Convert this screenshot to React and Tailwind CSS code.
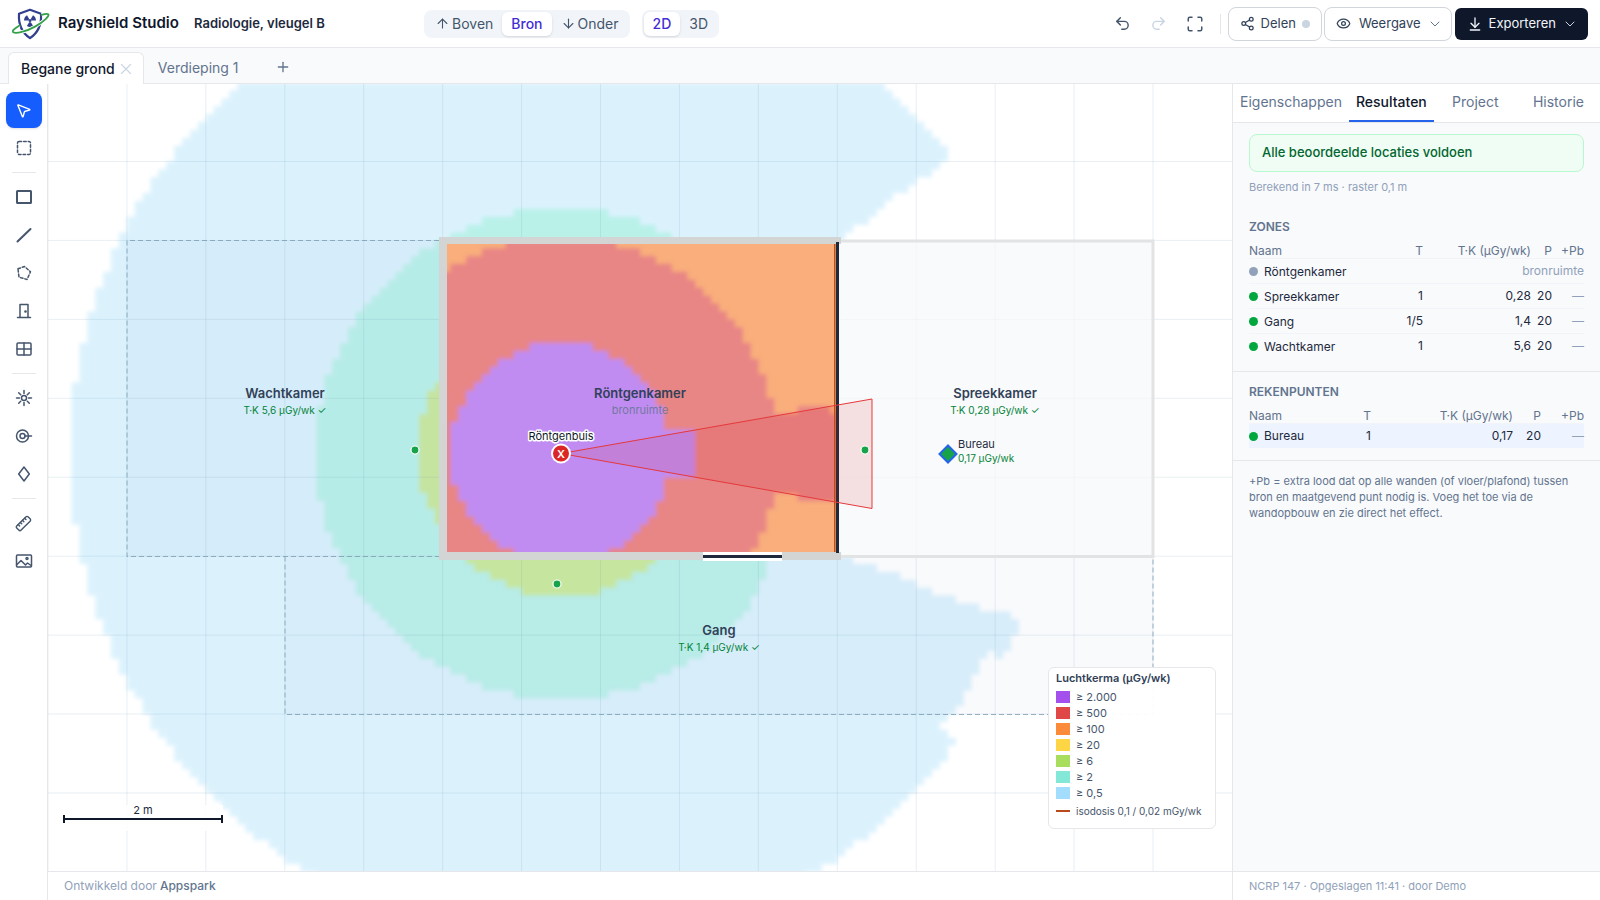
import React, { useState } from 'react';
import {
  ArrowDown, ArrowDownToLine, ArrowUp, ChevronDown, Eye, Maximize, MousePointer2,
  Plus, Redo2, Ruler, Share2, Undo2, X,
} from 'lucide-react';

// One metre on the plan, and the 0.1 m raster of the dose map
const METER = 78.93;
const CELL = METER / 10;
const GRID_X = 48;
const GRID_Y = 82.6;
const SOURCE = { x: 561, y: 453.5 };

const inPolygon = (x, y, pts) => {
  let inside = false;
  for (let i = 0, j = pts.length - 1; i < pts.length; j = i++) {
    const [xi, yi] = pts[i];
    const [xj, yj] = pts[j];
    if (yi > y !== yj > y && x < ((xj - xi) * (y - yi)) / (yj - yi) + xi) inside = !inside;
  }
  return inside;
};

const distance = (x, y) => Math.hypot(x - SOURCE.x, y - SOURCE.y);

// Area shielded by the lead wall
const SHADOW = [
  [838, 244], [847, 234], [873, 216], [903, 190], [917, 183], [948, 158], [1232, 120],
  [1232, 640], [1020, 618], [993, 611], [933, 592], [897, 576], [840, 556],
];
const NOTCH = [[1040, 664], [1010, 648], [998, 660], [990, 652], [980, 667], [960, 702], [942, 727], [957, 741], [980, 760]];
const BEAM_HIGH = [[770, 415], [797, 415], [804, 405], [829, 405], [834, 413], [840, 413], [840, 495], [828, 500], [810, 503], [797, 495], [770, 494]];

const raster = (test) => {
  const rows = [];
  for (let j = 0; j < 101; j++) {
    const y = GRID_Y + j * CELL;
    let start = null;
    for (let i = 0; i <= 150; i++) {
      const x = GRID_X + i * CELL;
      const hit = i < 150 && test(x + CELL / 2, y + CELL / 2);
      if (hit && start === null) start = x;
      if (!hit && start !== null) {
        rows.push(`M${start.toFixed(1)} ${y.toFixed(1)}H${x.toFixed(1)}V${(y + CELL).toFixed(1)}H${start.toFixed(1)}Z`);
        start = null;
      }
    }
  }
  return rows.join('');
};

const BLUE = raster((x, y) => distance(x, y) < 490 && !inPolygon(x, y, SHADOW) && !inPolygon(x, y, NOTCH));
const TEAL = raster((x, y) => distance(x, y) < 245 && !(y > 500 && x > 770 - (y - 556) * 0.38));
const GREEN = raster((x, y) => distance(x, y) < 143);
const RED = raster((x, y) => distance(x, y) < 216 || inPolygon(x, y, BEAM_HIGH));
const PURPLE = raster((x, y) => (distance(x, y) < 111 && x < 664) || (x > 650 && x < 697 && y > 428 && y < 478));

const legend = [
  { label: '≥ 2.000', color: 'bg-[#a450ec]' },
  { label: '≥ 500', color: 'bg-[#e04848]' },
  { label: '≥ 100', color: 'bg-[#fb8a3b]' },
  { label: '≥ 20', color: 'bg-[#fdd545]' },
  { label: '≥ 6', color: 'bg-[#a9dd5e]' },
  { label: '≥ 2', color: 'bg-[#83e8d7]' },
  { label: '≥ 0,5', color: 'bg-[#a3ddfd]' },
];

const zones = [
  { name: 'Röntgenkamer', source: true },
  { name: 'Spreekkamer', t: '1', tk: '0,28', p: '20' },
  { name: 'Gang', t: '1/5', tk: '1,4', p: '20' },
  { name: 'Wachtkamer', t: '1', tk: '5,6', p: '20' },
];

const points = [{ name: 'Bureau', t: '1', tk: '0,17', p: '20', selected: true }];

const Glyph = ({ children, size = 18, width = 1.5 }) => (
  <svg
    width={size} height={size} viewBox="0 0 18 18" fill="none" stroke="currentColor"
    strokeWidth={width} strokeLinecap="round" strokeLinejoin="round" aria-hidden="true"
  >
    {children}
  </svg>
);

const toolGroups = [
  [
    { id: 'Selecteren', icon: <MousePointer2 size={17} strokeWidth={2} /> },
    { id: 'Gebied', icon: <Glyph><rect x="2.5" y="2.5" width="13" height="13" rx="1.5" strokeDasharray="2.6 2" /></Glyph> },
  ],
  [
    { id: 'Ruimte', icon: <Glyph width={2}><rect x="2" y="3" width="14" height="12" rx="0.5" /></Glyph> },
    { id: 'Wand', icon: <Glyph width={2}><path d="M2.5 15.5 15.5 3" /></Glyph> },
    { id: 'Zone', icon: <Glyph><path d="M3 4.8 9.5 2.5 15.5 7.8 12 15.5 4 13.2Z" strokeDasharray="2.6 2" /></Glyph> },
    { id: 'Deur', icon: <Glyph><path d="M2.5 15.5h13M5 15.5V2.5h8v13" /><circle cx="10.5" cy="9.5" r="0.6" fill="currentColor" /></Glyph> },
    { id: 'Raam', icon: <Glyph><rect x="2" y="3" width="14" height="12" rx="1" /><path d="M9 3v12M2 9h14" /></Glyph> },
  ],
  [
    {
      id: 'Bron',
      icon: (
        <Glyph>
          <circle cx="9" cy="9" r="2.5" />
          <path d="M9 1.5v3M9 13.5v3M1.5 9h3M13.5 9h3M3.7 3.7l2 2M12.3 12.3l2 2M14.3 3.7l-2 2M5.7 12.3l-2 2" />
        </Glyph>
      ),
    },
    { id: 'CT', icon: <Glyph><circle cx="7.5" cy="9" r="6" /><circle cx="7.5" cy="9" r="2.5" /><path d="M10 9h6.5" /></Glyph> },
    { id: 'Rekenpunt', icon: <Glyph><path d="M9 2 14.3 9 9 16 3.7 9Z" /></Glyph> },
  ],
  [
    { id: 'Meten', icon: <Ruler size={17} strokeWidth={2} className="-rotate-90" /> },
    { id: 'Achtergrond', icon: <Glyph><rect x="1.5" y="3" width="15" height="12" rx="1" /><path d="M2 12.5 6 8.5l4.5 4.5 2-2 3.5 2.5" /><circle cx="12" cy="6.5" r="1" /></Glyph> },
  ],
];

const Logo = () => (
  <svg width="38" height="32" viewBox="0 0 38 32" fill="none" aria-hidden="true">
    <path d="M18 1.8 29 5.8c.6 9.2-1.8 18.2-11 24.4C8.8 24 6.4 15 7 5.8Z" fill="#fff" stroke="#323f8e" strokeWidth="2.2" strokeLinejoin="round" />
    <circle cx="18" cy="12.5" r="1.5" fill="#323f8e" />
    <path d="M16.3 12.5H12a6.2 6.2 0 0 1 3-5.3l2.2 3.7ZM19.7 12.5H24a6.2 6.2 0 0 0-3-5.3l-2.2 3.7ZM17.1 14.3l-2.2 3.8a6.2 6.2 0 0 0 6.2 0l-2.2-3.8Z" fill="#323f8e" />
    <path d="M7.5 17.5C2 20.8-.3 23.2 1.3 24.3 4 26 14 23.6 23 18.6 32 13.6 38 7.6 36.2 6.2 35.3 5.5 32.6 5.9 29.6 6.9" stroke="#fff" strokeWidth="3.6" />
    <path d="M7.5 17.5C2 20.8-.3 23.2 1.3 24.3 4 26 14 23.6 23 18.6 32 13.6 38 7.6 36.2 6.2 35.3 5.5 32.6 5.9 29.6 6.9" stroke="#35a04a" strokeWidth="1.8" strokeLinecap="round" />
  </svg>
);

const Segment = ({ active, onClick, children }) => (
  <button
    onClick={onClick}
    className={`flex items-center gap-0.5 h-6 px-[9px] rounded-md text-sm cursor-pointer ${
      active ? 'bg-white font-medium text-indigo-700 shadow-sm' : 'text-slate-600'
    }`}
  >
    {children}
  </button>
);

const Header = () => {
  const [layer, setLayer] = useState('Bron');
  const [view, setView] = useState('2D');
  return (
    <header className="flex items-center h-12 px-3 border-b border-gray-200 bg-white shrink-0">
      <div className="flex items-center gap-2 w-[174px] shrink-0">
        <Logo />
        <span className="text-[15px] font-semibold text-slate-900 whitespace-nowrap">Rayshield Studio</span>
      </div>
      <input
        aria-label="Projectnaam"
        defaultValue="Radiologie, vleugel B"
        className="w-[222px] px-2 text-[13px] font-semibold text-slate-800 outline-none"
      />
      <div className="flex items-center h-7 p-0.5 ml-4 rounded-lg bg-slate-100">
        <Segment active={layer === 'Boven'} onClick={() => setLayer('Boven')}><ArrowUp size={15} strokeWidth={1.75} />Boven</Segment>
        <Segment active={layer === 'Bron'} onClick={() => setLayer('Bron')}>Bron</Segment>
        <Segment active={layer === 'Onder'} onClick={() => setLayer('Onder')}><ArrowDown size={15} strokeWidth={1.75} />Onder</Segment>
      </div>
      <div className="flex items-center h-7 p-0.5 ml-3 rounded-lg bg-slate-100">
        <Segment active={view === '2D'} onClick={() => setView('2D')}>2D</Segment>
        <Segment active={view === '3D'} onClick={() => setView('3D')}>3D</Segment>
      </div>

      <div className="flex items-center ml-auto">
        <button aria-label="Ongedaan maken" className="w-9 h-8 flex items-center justify-center text-slate-600"><Undo2 size={17} /></button>
        <button aria-label="Opnieuw" className="w-9 h-8 flex items-center justify-center text-slate-300"><Redo2 size={17} /></button>
        <button aria-label="Passend maken" className="w-9 h-8 flex items-center justify-center text-slate-600"><Maximize size={18} /></button>
        <div className="w-px h-5 mx-[7px] bg-gray-200" />
        <button className="flex items-center h-[34px] px-[11px] rounded-lg border border-gray-300 text-[13px] text-slate-700">
          <Share2 size={15} className="mr-1.5" />
          Delen
          <span className="w-2 h-2 ml-1.5 rounded-full bg-slate-300" />
        </button>
        <button className="flex items-center h-[34px] pl-[11px] pr-2 ml-0.5 rounded-lg border border-gray-300 text-[13px] text-slate-700">
          <Eye size={15} className="mr-2" />
          Weergave
          <ChevronDown size={16} strokeWidth={1.5} className="ml-1.5 text-slate-500" />
        </button>
        <button className="flex items-center h-8 pl-3 pr-2.5 ml-[3px] rounded-md bg-slate-900 text-[13px] text-slate-100">
          <ArrowDownToLine size={16} className="mr-1.5" />
          Exporteren
          <ChevronDown size={16} strokeWidth={1.5} className="ml-1.5 text-slate-300" />
        </button>
      </div>
    </header>
  );
};

const FloorTabs = () => (
  <nav className="flex items-end h-9 px-2 border-b border-gray-200 bg-[#f9fafc] shrink-0">
    <div className="flex items-center gap-0.5 h-8 pl-3 pr-2 -mb-px rounded-t-md border border-b-0 border-gray-200 bg-white">
      <button className="text-sm font-medium text-slate-900">Begane grond</button>
      <button aria-label="Sluiten" className="text-slate-300"><X size={18} strokeWidth={1.5} /></button>
    </div>
    <button className="h-8 pl-3.5 pt-0.5 text-sm text-slate-500">Verdieping 1</button>
    <button aria-label="Verdieping toevoegen" className="h-8 ml-9 text-slate-500"><Plus size={16} /></button>
  </nav>
);

const Toolbar = () => {
  const [tool, setTool] = useState('Selecteren');
  return (
    <aside className="w-12 shrink-0 flex flex-col items-center gap-0.5 pt-2 bg-white border-r border-gray-200">
      {toolGroups.map((group, index) => (
        <React.Fragment key={index}>
          {index > 0 && <div className="w-6 h-px my-1 bg-gray-200 shrink-0" />}
          {group.map(({ id, icon }) => (
            <button
              key={id}
              aria-label={id}
              onClick={() => setTool(id)}
              className={`w-9 h-9 shrink-0 rounded-lg flex items-center justify-center cursor-pointer ${
                tool === id ? 'bg-[#155dfc] text-white shadow-sm' : 'text-slate-600'
              }`}
            >
              {icon}
            </button>
          ))}
        </React.Fragment>
      ))}
    </aside>
  );
};

const ZoneLabel = ({ x, y, name, value }) => (
  <g textAnchor="middle">
    <text x={x} y={y} className="text-[13px] font-semibold fill-slate-700">{name}</text>
    <text x={x} y={y + 16} className="text-[10px] fill-green-700">{value}</text>
  </g>
);

const Plan = () => (
  <svg viewBox="48 84 1184 787" preserveAspectRatio="xMidYMid slice" className="absolute inset-0 w-full h-full">
    <defs>
      <clipPath id="room"><rect x="447" y="244" width="389" height="308" /></clipPath>
      <filter id="smooth" x="-5%" y="-5%" width="110%" height="110%"><feGaussianBlur stdDeviation="2" /></filter>
    </defs>

    {/* Dose map outside the room */}
    <g filter="url(#smooth)">
      <path d={BLUE} fill="#dbf2fd" />
      <path d={TEAL} fill="#b9f1e9" />
      <path d={GREEN} fill="#c9e99c" />
    </g>

    <g stroke="#648caa" strokeOpacity="0.14">
      {Array.from({ length: 15 }, (_, i) => (
        <line key={`v${i}`} x1={GRID_X + i * METER} x2={GRID_X + i * METER} y1="84" y2="871" />
      ))}
      {Array.from({ length: 10 }, (_, i) => (
        <line key={`h${i}`} x1="48" x2="1232" y1={GRID_Y + i * METER} y2={GRID_Y + i * METER} />
      ))}
    </g>

    {/* Zones */}
    <rect x="127" y="240.5" width="312" height="316" fill="#94b4d8" fillOpacity="0.08" />
    <rect x="837" y="240.5" width="316" height="316" fill="#f6f8fa" fillOpacity="0.7" />
    <rect x="285" y="556.5" width="868" height="158" fill="#94a9c8" fillOpacity="0.06" />
    <g fill="none" stroke="#7e9bb3" strokeOpacity="0.8" strokeDasharray="5 3">
      <path d="M439 240.5H127V556.5H439" />
      <path d="M285 556.5V714.5H1153V556.5" />
    </g>
    <path d="M840 241H1153V556.5H840" fill="none" stroke="#e2e3e4" strokeWidth="3" />

    {/* X-ray room */}
    <rect x="439" y="237" width="402" height="323" fill="#d3d4d4" />
    <rect x="836" y="244" width="5" height="308" fill="#f8fafc" />
    <g clipPath="url(#room)">
      <rect x="447" y="244" width="389" height="308" fill="#f9ae7b" />
      <g filter="url(#smooth)">
        <path d={RED} fill="#e88585" />
        <path d={PURPLE} fill="#c08cf2" />
      </g>
    </g>
    <rect x="834" y="244" width="1.5" height="308" fill="#b4531c" />
    <rect x="836" y="242" width="3" height="311" fill="#1e293b" />
    <rect x="703" y="552" width="79" height="9" fill="#fff" />
    <rect x="703" y="555" width="79" height="3" fill="#1e293b" />

    <path d="M561 453.5 872 399V508.5Z" fill="#dc2626" fillOpacity="0.12" stroke="#e5383b" />

    <ZoneLabel x={285} y={398} name="Wachtkamer" value="T·K 5,6 µGy/wk ✓" />
    <ZoneLabel x={995} y={398} name="Spreekkamer" value="T·K 0,28 µGy/wk ✓" />
    <ZoneLabel x={719} y={635} name="Gang" value="T·K 1,4 µGy/wk ✓" />
    <g textAnchor="middle">
      <text x="640" y="398" className="text-[13px] font-semibold fill-slate-700">Röntgenkamer</text>
      <text x="640" y="414" className="text-[11px] fill-slate-500" fillOpacity="0.85">bronruimte</text>
      <text x="561" y="440" className="text-[11px] fill-slate-900" stroke="#fff" strokeWidth="3" strokeLinejoin="round" paintOrder="stroke">
        Röntgenbuis
      </text>
    </g>

    <g fill="#16a34a" stroke="#fff" strokeWidth="1.2">
      <circle cx="415" cy="450" r="4" />
      <circle cx="557" cy="584" r="4" />
      <circle cx="865" cy="450" r="4" />
    </g>

    <circle cx="561" cy="453.5" r="9" fill="#dc2626" stroke="#fff" strokeWidth="2" />
    <text x="561" y="457.5" textAnchor="middle" className="text-[11px] font-semibold fill-white">X</text>

    <path d="M948 445.5 956.5 454 948 462.5 939.5 454Z" fill="#16a34a" stroke="#2563eb" strokeWidth="2" />
    <text x="958" y="448" className="text-[11px] fill-slate-800">Bureau</text>
    <text x="958" y="462" className="text-[10px] fill-green-700">0,17 µGy/wk</text>
  </svg>
);

const ScaleBar = () => (
  <div className="absolute left-[15px] bottom-10 pb-2 bg-white/90 text-center text-[11px] leading-[10px] text-slate-800">
    2 m
    <div className="relative w-40 h-2 border-x-2 border-slate-900">
      <div className="absolute inset-x-0 top-[3px] h-0.5 bg-slate-900" />
    </div>
  </div>
);

const Legend = () => (
  <div className="absolute right-4 bottom-[42px] w-[168px] px-[7px] pt-[2px] pb-[9px] rounded-md border border-gray-200 bg-white/95 text-[11px] leading-4 text-slate-600 whitespace-nowrap">
    <div className="mb-[3px] font-semibold text-slate-700">Luchtkerma (µGy/wk)</div>
    {legend.map(({ label, color }) => (
      <div key={label} className="flex items-center gap-1.5">
        <span className={`w-3.5 h-3 ${color}`} />
        {label}
      </div>
    ))}
    <div className="flex items-center gap-1.5 mt-0.5 text-[10px]">
      <span className="w-3.5 h-0.5 shrink-0 bg-[#b94a1e]" />
      isodosis 0,1 / 0,02 mGy/wk
    </div>
  </div>
);

const DoseTable = ({ rows, wide }) => (
  <table className="w-full table-fixed text-xs text-slate-800">
    <colgroup>
      <col />
      <col className={wide ? 'w-[42px]' : 'w-[36px]'} />
      <col className={wide ? 'w-[142px]' : 'w-[108px]'} />
      <col className={wide ? 'w-[28px]' : 'w-[21px]'} />
      <col className={wide ? 'w-[43px]' : 'w-[32px]'} />
    </colgroup>
    <thead>
      <tr className="text-right text-slate-500 leading-[15px]">
        <th className="text-left font-normal">Naam</th>
        <th className="font-normal">T</th>
        <th className="font-normal">T·K (µGy/wk)</th>
        <th className="font-normal">P</th>
        <th className="font-normal">+Pb</th>
      </tr>
    </thead>
    <tbody>
      {rows.map((row) => (
        <tr key={row.name} className={`h-[25px] text-right border-t border-slate-100 ${row.selected ? 'bg-[#eef4ff]' : ''}`}>
          <td className="text-left whitespace-nowrap">
            <span className={`inline-block w-[9px] h-[9px] mr-1.5 rounded-full align-middle ${row.source ? 'bg-slate-400' : 'bg-[#00a63e]'}`} />
            <span className="align-middle">{row.name}</span>
          </td>
          {row.source ? (
            <td colSpan={4} className="text-slate-400">bronruimte</td>
          ) : (
            <>
              <td>{row.t}</td>
              <td>{row.tk}</td>
              <td>{row.p}</td>
              <td className="text-slate-400">—</td>
            </>
          )}
        </tr>
      ))}
    </tbody>
  </table>
);

const ResultsPanel = () => {
  const [tab, setTab] = useState('Resultaten');
  return (
    <aside className="w-[368px] shrink-0 flex flex-col bg-[#f9fafc] border-l border-gray-200">
      <div className="flex h-[39px] shrink-0 bg-white border-b border-gray-200">
        {['Eigenschappen', 'Resultaten', 'Project', 'Historie'].map((name) => (
          <button
            key={name}
            onClick={() => setTab(name)}
            className={`flex-1 px-[7px] text-sm border-b-2 cursor-pointer ${
              tab === name ? 'border-[#2563eb] font-medium text-slate-900' : 'border-transparent text-slate-500'
            }`}
          >
            {name}
          </button>
        ))}
      </div>

      <section className="px-4 pt-[11px] pb-3 border-b border-gray-200">
        <div className="h-[38px] px-3 flex items-center rounded-lg border border-green-200 bg-green-50 text-[13px] font-medium text-green-800">
          Alle beoordeelde locaties voldoen
        </div>
        <p className="mt-[7px] text-[11px] leading-4 text-slate-400">Berekend in 7 ms · raster 0,1 m</p>
        <h2 className="mt-6 mb-2 text-xs font-semibold text-slate-500">ZONES</h2>
        <DoseTable rows={zones} />
      </section>

      <section className="px-4 py-3 border-b border-gray-200">
        <h2 className="mb-2 text-xs font-semibold text-slate-500">REKENPUNTEN</h2>
        <DoseTable rows={points} wide />
      </section>

      <p className="px-4 py-3 text-[11px] leading-4 text-slate-500">
        +Pb = extra lood dat op alle wanden (of vloer/plafond) tussen bron en maatgevend punt nodig is. Voeg het toe via de wandopbouw en zie direct het effect.
      </p>

      <footer className="mt-auto h-[29px] px-4 flex items-center bg-white border-t border-gray-200 text-[11px] text-slate-400">
        NCRP 147 · Opgeslagen 11:41 · door Demo
      </footer>
    </aside>
  );
};

const App = () => (
  <div className="h-screen flex flex-col overflow-hidden bg-white font-[Inter,sans-serif]">
    <Header />
    <FloorTabs />
    <div className="flex flex-1 min-h-0">
      <Toolbar />
      <main className="flex-1 min-w-0 flex flex-col">
        <div className="relative flex-1 overflow-hidden bg-white">
          <Plan />
          <ScaleBar />
          <Legend />
        </div>
        <footer className="h-[29px] px-4 flex items-center gap-[3px] border-t border-gray-200 text-xs text-slate-400">
          Ontwikkeld door <a href="#appspark" className="font-medium text-slate-500">Appspark</a>
        </footer>
      </main>
      <ResultsPanel />
    </div>
  </div>
);

export default App;
